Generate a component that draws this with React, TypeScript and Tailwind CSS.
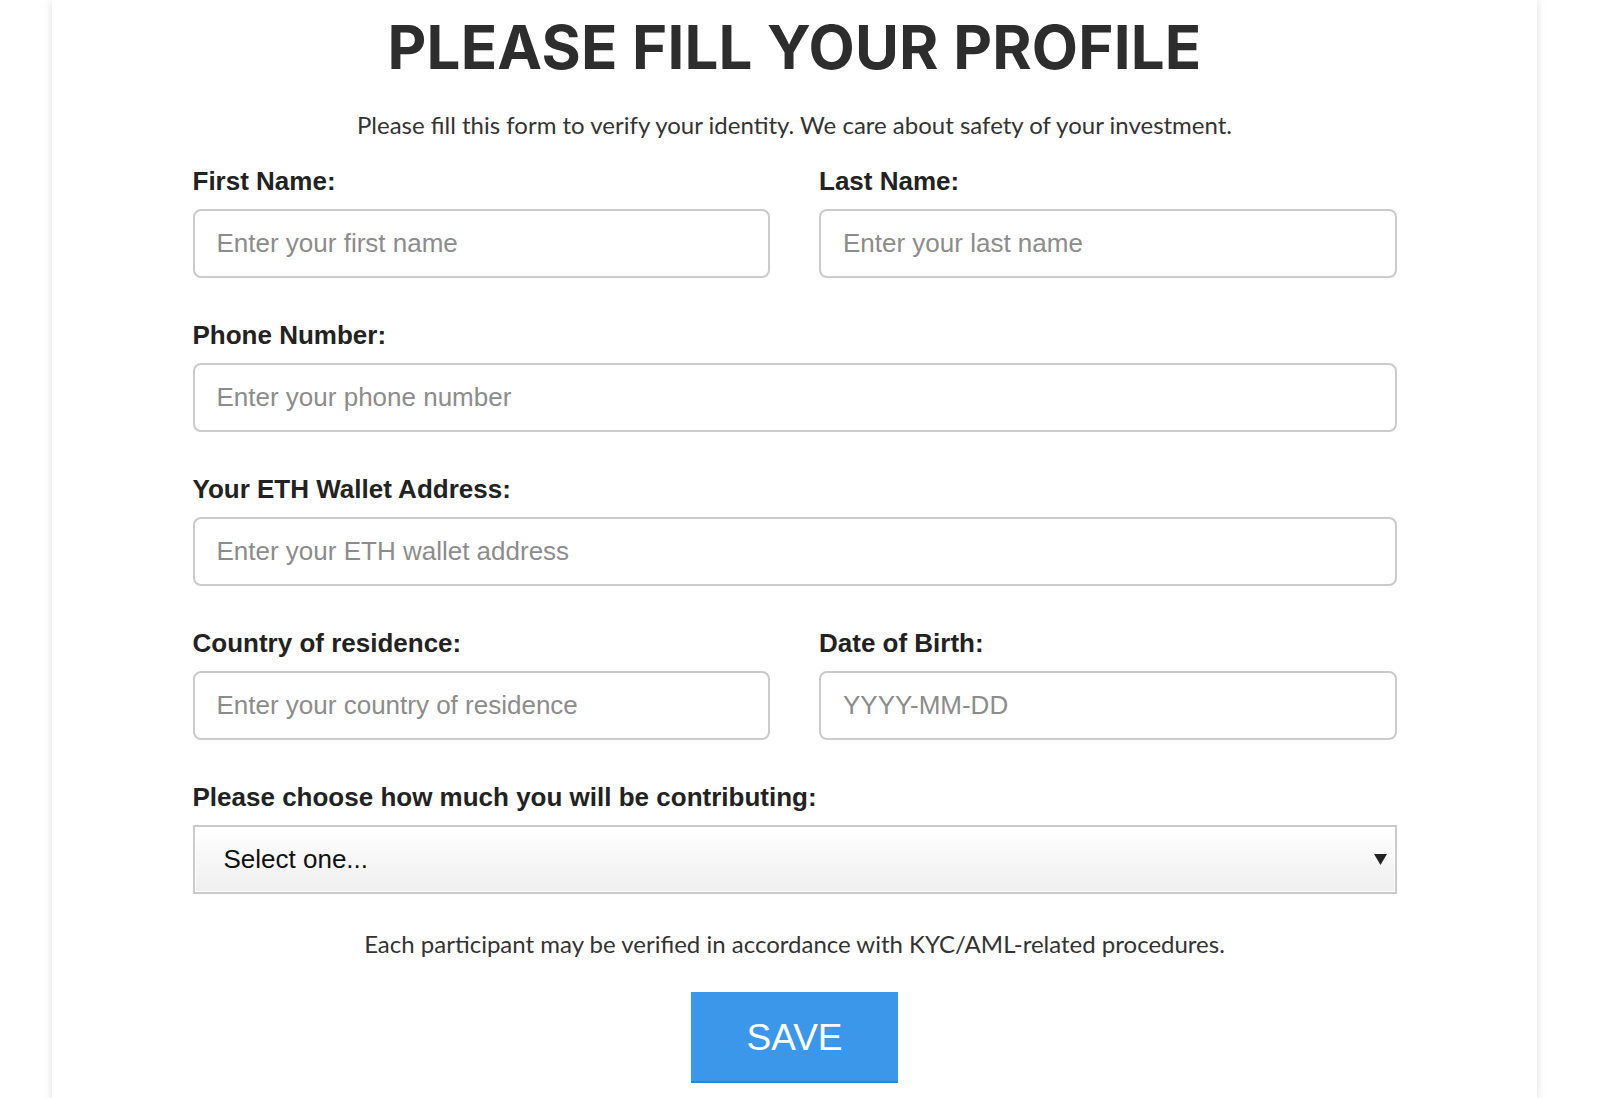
import React from "react";

const labelCls =
  "block text-[26px] leading-[30px] font-bold text-[#222] [font-family:'Liberation_Sans',Arial,sans-serif]";
const inputCls =
  "block w-full h-[69px] rounded-[8px] border-2 border-[#cbcbcb] bg-white px-[22px] text-[26px] text-[#333] placeholder:text-[#8c8c8c] outline-none [font-family:'Liberation_Sans',Arial,sans-serif]";

function Field({ label, placeholder }: { label: string; placeholder: string }) {
  return (
    <div className="flex flex-col gap-[13px]">
      <label className={labelCls}>{label}</label>
      <input className={inputCls} placeholder={placeholder} />
    </div>
  );
}

export default function App() {
  return (
    <div className="min-h-[1098px] w-[1600px] bg-white">
      <div className="ml-[52px] w-[1485px] min-h-[1098px] bg-white shadow-[0_0_9px_rgba(0,0,0,0.13)]">
        <div className="mx-auto w-[1204px] pb-[20px]">
          <h1 className="h-[94px] text-center text-[60px] leading-[94px] font-bold tracking-[0.2px] text-[#2d2d2d] [font-family:Inter,sans-serif]">
            PLEASE FILL YOUR PROFILE
          </h1>
          <p className="mt-[11px] text-center text-[24px] leading-[40px] tracking-[0px] text-[#333] [font-family:Lato,sans-serif]">
            Please fill this form to verify your identity. We care about safety of your investment.
          </p>
          <div className="mt-[21px] flex flex-col gap-[42px]">
            <div className="grid grid-cols-2 gap-[49px]">
              <Field label="First Name:" placeholder="Enter your first name" />
              <Field label="Last Name:" placeholder="Enter your last name" />
            </div>
            <Field label="Phone Number:" placeholder="Enter your phone number" />
            <Field label="Your ETH Wallet Address:" placeholder="Enter your ETH wallet address" />
            <div className="grid grid-cols-2 gap-[49px]">
              <Field label="Country of residence:" placeholder="Enter your country of residence" />
              <Field label="Date of Birth:" placeholder="YYYY-MM-DD" />
            </div>
            <div className="flex flex-col gap-[13px]">
              <label className={labelCls}>Please choose how much you will be contributing:</label>
              <div className="relative h-[69px] border-2 border-[#cacaca] bg-gradient-to-b from-white to-[#efefef] shadow-[inset_0_0_0_1px_#ffffff]">
                <div className="flex h-full items-center pl-[29px] text-[26px] text-[#111] [font-family:'Liberation_Sans',Arial,sans-serif]">
                  Select one...
                </div>
                <svg
                  className="absolute right-[8px] top-[27px]"
                  width="13"
                  height="11"
                  viewBox="0 0 13 11"
                >
                  <path d="M0 0 H13 L6.5 11 Z" fill="#222" />
                </svg>
              </div>
            </div>
          </div>
          <p className="mt-[35px] text-center text-[24px] leading-[30px] tracking-[0px] text-[#333] [font-family:Lato,sans-serif]">
            Each participant may be verified in accordance with KYC/AML-related procedures.
          </p>
          <div className="mt-[33px] flex justify-center">
            <button className="h-[91px] w-[207px] bg-[#3a97e9] border-b-2 border-[#2a86d6] pt-[3px] text-[37px] text-white [font-family:'Liberation_Sans',Arial,sans-serif]">
              SAVE
            </button>
          </div>
        </div>
      </div>
    </div>
  );
}
